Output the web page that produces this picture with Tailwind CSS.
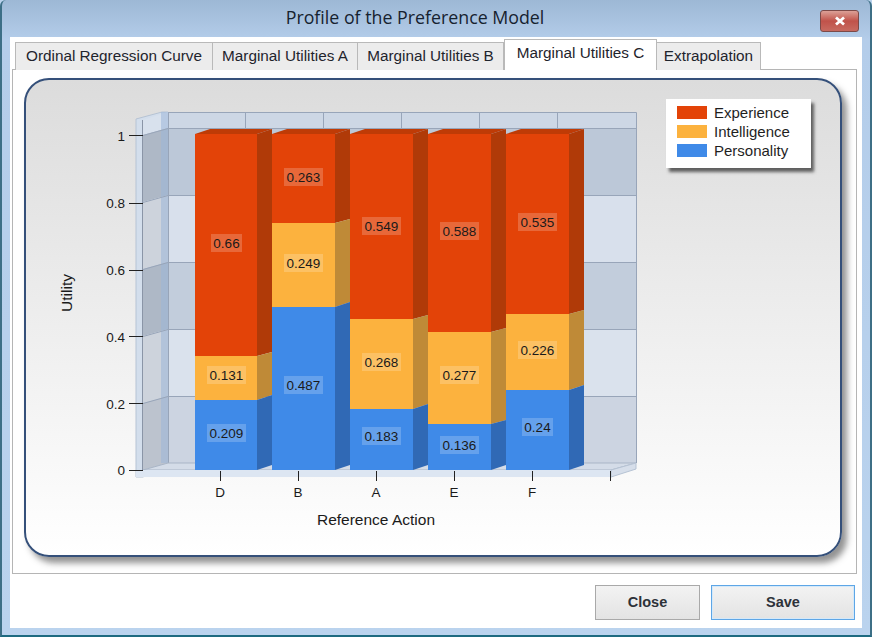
<!DOCTYPE html>
<html lang="en">
<head>
  <meta charset="UTF-8">
  <title>Profile of the Preference Model</title>
  <script src="https://cdn.jsdelivr.net/npm/@tailwindcss/browser@4"></script>
</head>
<body class="w-[872px] h-[637px] overflow-hidden bg-[#b9d2ec] font-['Liberation_Sans',sans-serif]">
  <div class="w-[872px] h-[637px] flex flex-col border-b-2 border-x-2 border-b-[#1d6a80] border-x-[#3d6f86] rounded-t-md bg-gradient-to-b from-[#9db8d5] from-0% via-[#b4cdea] via-[40px] to-[#bad3ee] pl-[8px] pr-[8px] pb-[7px]">

    <!-- title bar -->
    <div class="h-[37px] shrink-0 flex items-center relative">
      <div class="w-full text-center text-[17.8px] text-[#16222f] font-['Open_Sans',sans-serif] pb-[2px] pr-[42px]">Profile of the Preference Model</div>
      <div class="absolute left-[810px] top-[10px] w-[39px] h-[22px] rounded-[3px] border border-[#7c4a48] bg-gradient-to-b from-[#dba097] via-[#c0524a] to-[#c76a60] flex items-center justify-center">
        <svg width="14" height="10" viewBox="0 0 14 10"><path d="M3 1.500 L11 8.500 M11 1.500 L3 8.500" stroke="#fff" stroke-width="2.800"/></svg>
      </div>
    </div>

    <div class="flex-1 bg-white flex flex-col min-h-0">
      <!-- tabs -->
      <div class="h-[33px] shrink-0 flex items-end pl-[5px] text-[15.3px] text-[#1f242c] relative z-10">
        <div class="w-[198px] h-[28px] flex items-center justify-center bg-[#ececec] border border-b-0 border-[#b9b9b9]">Ordinal Regression Curve</div>
        <div class="w-[145px] h-[28px] flex items-center justify-center bg-[#ececec] border border-l-0 border-b-0 border-[#b9b9b9]">Marginal Utilities A</div>
        <div class="w-[146px] h-[28px] flex items-center justify-center bg-[#ececec] border border-l-0 border-b-0 border-[#b9b9b9]">Marginal Utilities B</div>
        <div class="w-[153px] h-[31px] flex items-center justify-center bg-white border border-b-0 border-[#b9b9b9] pb-[3px]">Marginal Utilities C</div>
        <div class="w-[104px] h-[28px] flex items-center justify-center bg-[#ececec] border border-l-0 border-b-0 border-[#b9b9b9]">Extrapolation</div>
      </div>

      <!-- panel -->
      <div class="h-[505px] shrink-0 ml-[2px] mr-[5px] -mt-[1px] border border-[#b5b5b5] pl-[11px] pt-[8px]">
        <div class="relative w-[818px] h-[479px] rounded-[25px] border-2 border-[#35507a] bg-gradient-to-b from-[#dcdcdc] to-white shadow-[5px_6px_6px_rgba(40,40,40,0.5)]">
          <svg class="block" width="814" height="475" viewBox="26 80 814 475" font-family="Liberation Sans" font-size="13.5" fill="#1a1a1a">
            <!-- left wall outer edge and top edge -->
            <polygon points="136,119 162,112 168,112 168,463 143,477 136,477" fill="#d3deec" stroke="#b6c3d4"/>
            <polygon points="143,120 168,112 168,128 143,135" fill="#d8e1ed"/>

            <!-- back wall bands -->
            <rect x="168" y="112" width="468" height="16" fill="#cdd7e5"/>
            <rect x="168" y="128" width="468" height="67" fill="#bcc8d8"/>
            <rect x="168" y="195" width="468" height="67" fill="#d8e0ec"/>
            <rect x="168" y="262" width="468" height="67" fill="#c2cddc"/>
            <rect x="168" y="329" width="468" height="67" fill="#dae2ed"/>
            <rect x="168" y="396" width="468" height="67" fill="#ccd4e1"/>

            <!-- left wall bands -->
            <polygon points="143,135 168,128 168,195 143,202" fill="#aeb8c6"/>
            <polygon points="143,202 168,195 168,262 143,269" fill="#cdd3dc"/>
            <polygon points="143,269 168,262 168,329 143,336" fill="#aeb8c6"/>
            <polygon points="143,336 168,329 168,396 143,403" fill="#cdd3dc"/>
            <polygon points="143,403 168,396 168,463 143,470" fill="#bcc3ce"/>
            <rect x="161" y="112" width="7" height="351" fill="#9db7d8" fill-opacity="0.55"/>

            <!-- grid lines -->
            <g stroke="#98a5b9" stroke-width="1" fill="none">
              <path d="M143 135.500 L168 128.500 H636 M143 202.500 L168 195.500 H636 M143 269.500 L168 262.500 H636 M143 336.500 L168 329.500 H636 M143 403.500 L168 396.500 H636"/>
              <path d="M245.500 112 V128 M323.500 112 V128 M401.500 112 V128 M479.500 112 V128 M557.500 112 V128"/>
              <path d="M168.500 112 V463 M168 112.500 H636.500 V463"/>
            </g>
            <path d="M142.500 120 V470" stroke="#8a95a7" fill="none"/>

            <!-- floor -->
            <polygon points="143,470 168,463 636,463 611,470" fill="#d4dce8" stroke="#a9b5c6"/>
            <polygon points="136,470 611,470 611,477 136,477" fill="#dde6f2"/>
            <polygon points="611,470 636,463 636,469 611,477" fill="#d6deea" stroke="#b6c3d4"/>

            <!-- bar D -->
            <polygon points="195,134 210,129 272,129 257,134" fill="#bf3b06"/>
            <polygon points="257,134 272,129 272,352 257,356" fill="#b03a08"/>
            <polygon points="257,356 272,352 272,395 257,400" fill="#bf8a37"/>
            <polygon points="257,400 272,395 272,465 257,470" fill="#3069b5"/>
            <rect x="195" y="134" width="62" height="222" fill="#e34308"/>
            <rect x="195" y="356" width="62" height="44" fill="#fcb23e"/>
            <rect x="195" y="400" width="62" height="70" fill="#3f8ae8"/>

            <!-- bar B -->
            <polygon points="272,134 287,129 350,129 335,134" fill="#bf3b06"/>
            <polygon points="335,134 350,129 350,219 335,223" fill="#b03a08"/>
            <polygon points="335,223 350,219 350,302 335,307" fill="#bf8a37"/>
            <polygon points="335,307 350,302 350,465 335,470" fill="#3069b5"/>
            <rect x="272" y="134" width="63" height="89" fill="#e34308"/>
            <rect x="272" y="223" width="63" height="84" fill="#fcb23e"/>
            <rect x="272" y="307" width="63" height="163" fill="#3f8ae8"/>

            <!-- bar A -->
            <polygon points="350,134 365,129 428,129 413,134" fill="#bf3b06"/>
            <polygon points="413,134 428,129 428,315 413,319" fill="#b03a08"/>
            <polygon points="413,319 428,315 428,404 413,409" fill="#bf8a37"/>
            <polygon points="413,409 428,404 428,465 413,470" fill="#3069b5"/>
            <rect x="350" y="134" width="63" height="185" fill="#e34308"/>
            <rect x="350" y="319" width="63" height="90" fill="#fcb23e"/>
            <rect x="350" y="409" width="63" height="61" fill="#3f8ae8"/>

            <!-- bar E -->
            <polygon points="428,134 443,129 506,129 491,134" fill="#bf3b06"/>
            <polygon points="491,134 506,129 506,328 491,332" fill="#b03a08"/>
            <polygon points="491,332 506,328 506,420 491,424" fill="#bf8a37"/>
            <polygon points="491,424 506,420 506,465 491,470" fill="#3069b5"/>
            <rect x="428" y="134" width="63" height="198" fill="#e34308"/>
            <rect x="428" y="332" width="63" height="92" fill="#fcb23e"/>
            <rect x="428" y="424" width="63" height="46" fill="#3f8ae8"/>

            <!-- bar F -->
            <polygon points="506,134 521,129 584,129 569,134" fill="#bf3b06"/>
            <polygon points="569,134 584,129 584,310 569,314" fill="#b03a08"/>
            <polygon points="569,314 584,310 584,385 569,390" fill="#bf8a37"/>
            <polygon points="569,390 584,385 584,465 569,470" fill="#3069b5"/>
            <rect x="506" y="134" width="63" height="180" fill="#e34308"/>
            <rect x="506" y="314" width="63" height="76" fill="#fcb23e"/>
            <rect x="506" y="390" width="63" height="80" fill="#3f8ae8"/>

            <!-- value label boxes -->
            <g fill="#fff" fill-opacity="0.2">
              <rect x="211" y="234" width="31" height="18"/>
              <rect x="207" y="366" width="39" height="18"/>
              <rect x="207" y="424" width="39" height="18"/>
              <rect x="284" y="168" width="39" height="18"/>
              <rect x="284" y="254" width="39" height="18"/>
              <rect x="284" y="376" width="39" height="18"/>
              <rect x="362" y="217" width="39" height="18"/>
              <rect x="362" y="353" width="39" height="18"/>
              <rect x="362" y="427" width="39" height="18"/>
              <rect x="440" y="222" width="39" height="18"/>
              <rect x="440" y="366" width="39" height="18"/>
              <rect x="440" y="436" width="39" height="18"/>
              <rect x="518" y="213" width="39" height="18"/>
              <rect x="518" y="341" width="39" height="18"/>
              <rect x="522" y="418" width="31" height="18"/>
            </g>

            <!-- value labels -->
            <g text-anchor="middle" fill="#1a1a1a">
              <text x="226.500" y="248">0.66</text>
              <text x="226.500" y="380">0.131</text>
              <text x="226.500" y="438">0.209</text>
              <text x="303.500" y="182">0.263</text>
              <text x="303.500" y="268">0.249</text>
              <text x="303.500" y="390">0.487</text>
              <text x="381.500" y="231">0.549</text>
              <text x="381.500" y="367">0.268</text>
              <text x="381.500" y="441">0.183</text>
              <text x="459.500" y="236">0.588</text>
              <text x="459.500" y="380">0.277</text>
              <text x="459.500" y="450">0.136</text>
              <text x="537.500" y="227">0.535</text>
              <text x="537.500" y="355">0.226</text>
              <text x="537.500" y="432">0.24</text>
            </g>

            <!-- axes ticks -->
            <path d="M129 135.500 H143 M129 203.500 H143 M129 270.500 H143 M129 336.500 H143 M129 403.500 H143 M129 470.500 H143 M220.500 471 V481 M298.500 471 V481 M376.500 471 V481 M454.500 471 V481 M532.500 471 V481 M610.500 471 V481" stroke="#222" fill="none"/>
            <g text-anchor="end">
              <text x="125" y="141">1</text>
              <text x="125" y="208">0.8</text>
              <text x="125" y="275">0.6</text>
              <text x="125" y="342">0.4</text>
              <text x="125" y="409">0.2</text>
              <text x="125" y="475">0</text>
            </g>
            <g text-anchor="middle">
              <text x="220" y="497">D</text>
              <text x="298" y="497">B</text>
              <text x="376" y="497">A</text>
              <text x="454" y="497">E</text>
              <text x="532" y="497">F</text>
              <text x="376" y="525" font-size="15.500">Reference Action</text>
              <text transform="translate(72 293) rotate(-90)" font-size="15.500">Utility</text>
            </g>
          </svg>

          <!-- legend -->
          <div class="absolute left-[640px] top-[19px] w-[145px] h-[69px] bg-white shadow-[3px_4px_3px_rgba(40,40,40,0.7)] flex flex-col gap-[6px] pl-[11px] pt-[7px] text-[15px] leading-[13px] text-[#1f1f1f]">
            <div class="flex items-center gap-[7px]"><span class="w-[30px] h-[13px] bg-[#e34308]"></span><span>Experience</span></div>
            <div class="flex items-center gap-[7px]"><span class="w-[30px] h-[13px] bg-[#fcb23e]"></span><span>Intelligence</span></div>
            <div class="flex items-center gap-[7px]"><span class="w-[30px] h-[13px] bg-[#3f8ae8]"></span><span>Personality</span></div>
          </div>
        </div>
      </div>

      <!-- footer -->
      <div class="flex-1 flex justify-end items-start pt-[11px] pr-[7px] gap-[11px] text-[14.5px] font-bold text-[#2d3239]">
        <button class="w-[105px] h-[35px] bg-gradient-to-b from-[#f3f3f3] to-[#e3e3e3] border border-[#a9a9a9]">Close</button>
        <button class="w-[144px] h-[35px] bg-gradient-to-b from-[#f3f3f3] to-[#e3e3e3] border border-[#5ea6e6] shadow-[inset_0_0_0_1px_#d5e9f9]">Save</button>
      </div>
    </div>
  </div>
</body>
</html>
